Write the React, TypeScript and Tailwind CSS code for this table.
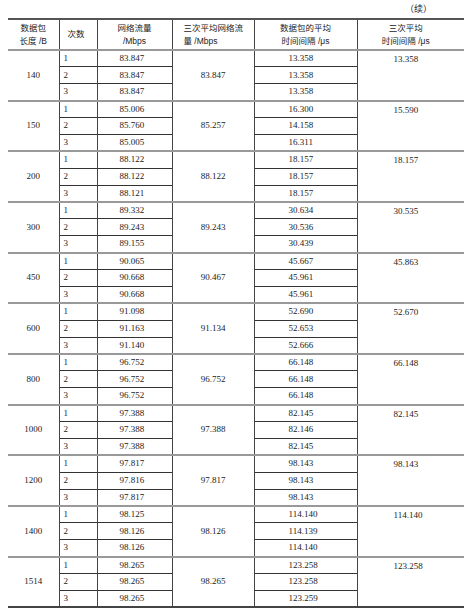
import React from "react";

type Group = {
  len: string;
  flow: [string, string, string];
  avgFlow: string;
  gap: [string, string, string];
  avgGap: string;
};

const groups: Group[] = [
  { len: "140", flow: ["83.847", "83.847", "83.847"], avgFlow: "83.847", gap: ["13.358", "13.358", "13.358"], avgGap: "13.358" },
  { len: "150", flow: ["85.006", "85.760", "85.005"], avgFlow: "85.257", gap: ["16.300", "14.158", "16.311"], avgGap: "15.590" },
  { len: "200", flow: ["88.122", "88.122", "88.121"], avgFlow: "88.122", gap: ["18.157", "18.157", "18.157"], avgGap: "18.157" },
  { len: "300", flow: ["89.332", "89.243", "89.155"], avgFlow: "89.243", gap: ["30.634", "30.536", "30.439"], avgGap: "30.535" },
  { len: "450", flow: ["90.065", "90.668", "90.668"], avgFlow: "90.467", gap: ["45.667", "45.961", "45.961"], avgGap: "45.863" },
  { len: "600", flow: ["91.098", "91.163", "91.140"], avgFlow: "91.134", gap: ["52.690", "52.653", "52.666"], avgGap: "52.670" },
  { len: "800", flow: ["96.752", "96.752", "96.752"], avgFlow: "96.752", gap: ["66.148", "66.148", "66.148"], avgGap: "66.148" },
  { len: "1000", flow: ["97.388", "97.388", "97.388"], avgFlow: "97.388", gap: ["82.145", "82.146", "82.145"], avgGap: "82.145" },
  { len: "1200", flow: ["97.817", "97.816", "97.817"], avgFlow: "97.817", gap: ["98.143", "98.143", "98.143"], avgGap: "98.143" },
  { len: "1400", flow: ["98.125", "98.126", "98.126"], avgFlow: "98.126", gap: ["114.140", "114.139", "114.140"], avgGap: "114.140" },
  { len: "1514", flow: ["98.265", "98.265", "98.265"], avgFlow: "98.265", gap: ["123.258", "123.258", "123.259"], avgGap: "123.258" },
];

const cjk = "font-['Liberation_Sans','Noto_Sans_CJK_SC',sans-serif]";
const num = "font-['Liberation_Serif','Noto_Sans_CJK_SC',serif]";

export default function App() {
  return (
    <div className="w-[474px] h-[616px] bg-white text-[#222] overflow-hidden">
      <div className={`${cjk} h-[18px] text-[9px] leading-[18px] text-right pr-[42px]`}>（续）</div>
      <table className="ml-[8px] w-[456px] table-fixed border-collapse border-t-2 border-b-2 border-t-[#555] border-b-[#444]">
        <colgroup>
          <col className="w-[51px]" />
          <col className="w-[38px]" />
          <col className="w-[75px]" />
          <col className="w-[82px]" />
          <col className="w-[103px]" />
          <col className="w-[107px]" />
        </colgroup>
        <thead>
          <tr className={`${cjk} h-[31px] text-[8.5px] leading-[12.5px] border-b border-b-[#333]`}>
            <th className="font-normal text-center border-r border-r-[#444]">
              数据包<br />长度 /B
            </th>
            <th className="font-normal text-center pr-[4px] border-r border-r-[#444]">次数</th>
            <th className="font-normal text-center border-r border-r-[#444]">
              网络流量<br />/Mbps
            </th>
            <th className="font-normal text-left pl-[11px] border-r border-r-[#444]">
              三次平均网络流<br />量 /Mbps
            </th>
            <th className="font-normal text-center border-r border-r-[#444]">
              数据包的平均<br />时间间隔 /μs
            </th>
            <th className="font-normal text-center pr-[10px]">
              三次平均<br />时间间隔 /μs
            </th>
          </tr>
        </thead>
        <tbody className={`${num} text-[9px]`}>
          {groups.map((g) =>
            [0, 1, 2].map((i) => (
              <tr
                key={`${g.len}-${i}`}
                className={`h-[16.9px] ${i === 0 ? "border-t-2 border-t-[#999]" : ""}`}
              >
                {i === 0 && (
                  <td rowSpan={3} className="text-center align-middle border-r border-r-[#444]">
                    {g.len}
                  </td>
                )}
                <td className={`pl-[4px] border-r border-r-[#444] ${i > 0 ? "border-t border-t-[#333]" : ""}`}>
                  {i + 1}
                </td>
                <td className={`pl-[22px] border-r border-r-[#444] ${i > 0 ? "border-t border-t-[#333]" : ""}`}>
                  {g.flow[i]}
                </td>
                {i === 0 && (
                  <td rowSpan={3} className="text-center align-middle border-r border-r-[#444]">
                    {g.avgFlow}
                  </td>
                )}
                <td className={`pl-[34px] border-r border-r-[#444] ${i > 0 ? "border-t border-t-[#333]" : ""}`}>
                  {g.gap[i]}
                </td>
                {i === 0 && (
                  <td rowSpan={3} className="align-top pl-[36px] pt-[2px]">
                    {g.avgGap}
                  </td>
                )}
              </tr>
            ))
          )}
        </tbody>
      </table>
    </div>
  );
}
